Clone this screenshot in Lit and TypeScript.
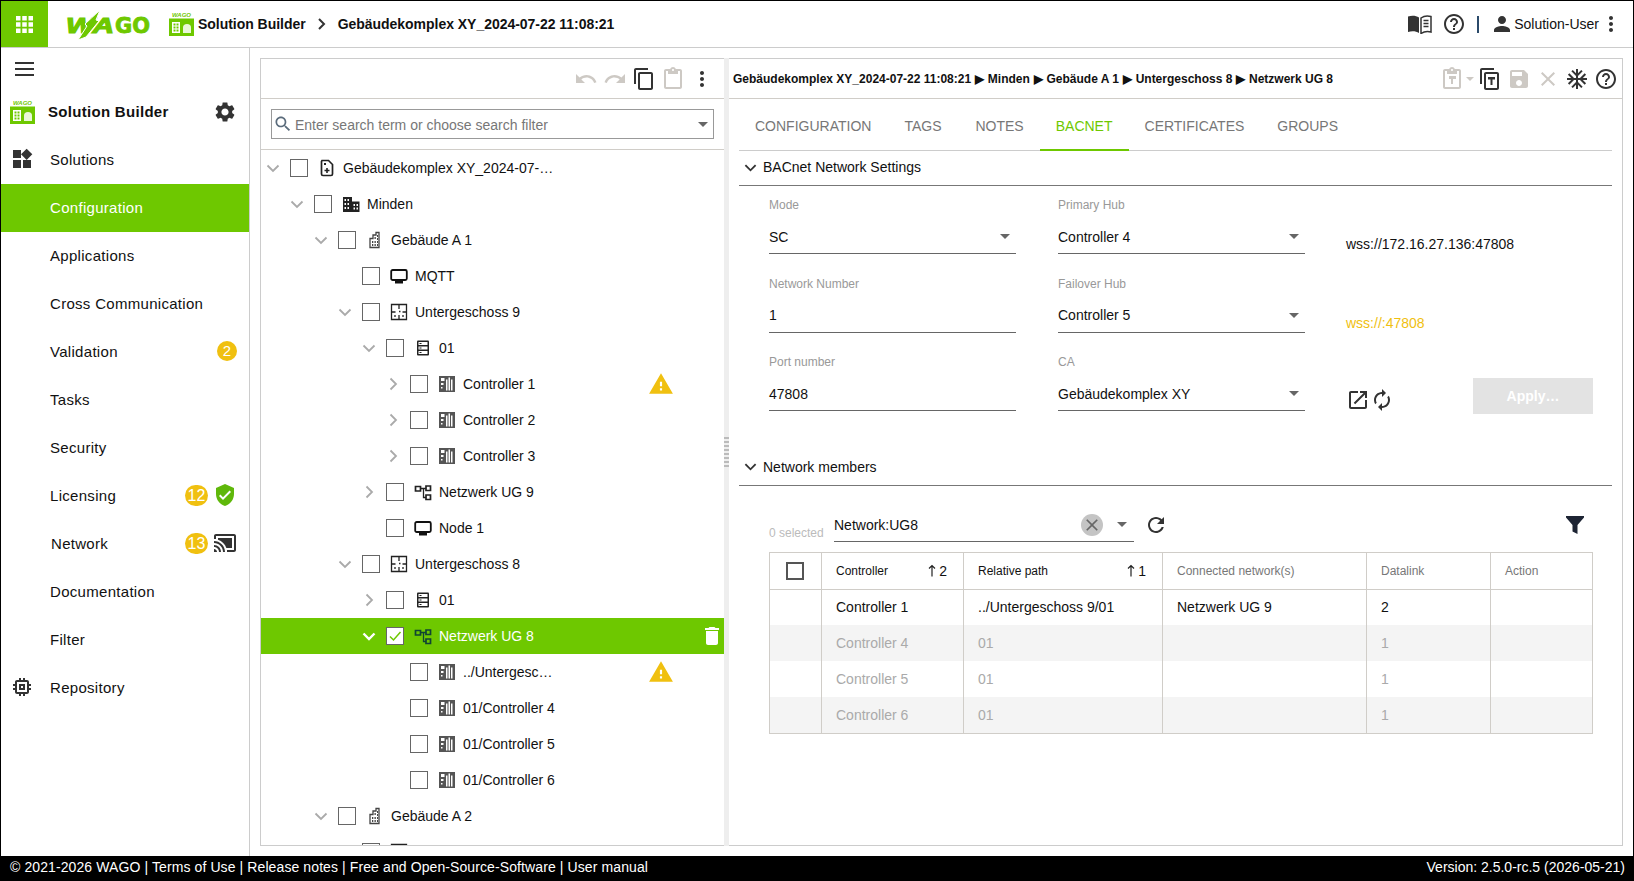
import { LitElement, html, css, nothing } from 'lit';
import { customElement } from 'lit/decorators.js';

const P = {
  gear: 'M19.14 12.94c.04-.3.06-.61.06-.94 0-.32-.02-.64-.07-.94l2.03-1.58c.18-.14.23-.41.12-.61l-1.92-3.32c-.12-.22-.37-.29-.59-.22l-2.39.96c-.5-.38-1.03-.7-1.62-.94l-.36-2.54c-.04-.24-.24-.41-.48-.41h-3.84c-.24 0-.43.17-.47.41l-.36 2.54c-.59.24-1.13.57-1.62.94l-2.39-.96c-.22-.08-.47 0-.59.22L2.74 8.87c-.12.21-.08.47.12.61l2.03 1.58c-.05.3-.09.63-.09.94s.02.64.07.94l-2.03 1.58c-.18.14-.23.41-.12.61l1.92 3.32c.12.22.37.29.59.22l2.39-.96c.5.38 1.03.7 1.62.94l.36 2.54c.05.24.24.41.48.41h3.84c.24 0 .44-.17.47-.41l.36-2.54c.59-.24 1.13-.56 1.62-.94l2.39.96c.22.08.47 0 .59-.22l1.92-3.32c.12-.22.07-.47-.12-.61l-2.01-1.58zM12 15.6c-1.98 0-3.6-1.62-3.6-3.6s1.62-3.6 3.6-3.6 3.6 1.62 3.6 3.6-1.62 3.6-3.6 3.6z',
  widgets: 'M13 13v8h8v-8h-8zM3 21h8v-8H3v8zM3 3v8h8V3H3zm13.66-1.31L11 7.34 16.66 13l5.66-5.66-5.66-5.65z',
  memory: 'M15 9H9v6h6V9zm-2 4h-2v-2h2v2zm8-2V9h-2V7c0-1.1-.9-2-2-2h-2V3h-2v2h-2V3H9v2H7c-1.1 0-2 .9-2 2v2H3v2h2v2H3v2h2v2c0 1.1.9 2 2 2h2v2h2v-2h2v2h2v-2h2c1.1 0 2-.9 2-2v-2h2v-2h-2v-2h2zm-4 6H7V7h10v10z',
  cast: 'M1 18v3h3c0-1.66-1.34-3-3-3zm0-4v2c2.76 0 5 2.24 5 5h2c0-3.87-3.13-7-7-7zm18-7H5v1.63c3.96 1.28 7.09 4.41 8.37 8.37H19V7zM1 10v2c4.97 0 9 4.03 9 9h2c0-6.08-4.93-11-11-11zm20-7H3c-1.1 0-2 .9-2 2v3h2V5h18v14h-7v2h7c1.1 0 2-.9 2-2V5c0-1.1-.9-2-2-2z',
  shield: 'M12 1L3 5v6c0 5.55 3.84 10.74 9 12 5.16-1.26 9-6.45 9-12V5l-9-4zm-2 16l-4-4 1.41-1.41L10 14.17l6.59-6.59L18 9l-8 8z',
  undo: 'M12.5 8c-2.65 0-5.05.99-6.9 2.6L2 7v9h9l-3.62-3.62c1.39-1.16 3.16-1.88 5.12-1.88 3.54 0 6.55 2.31 7.6 5.5l2.37-.78C21.08 11.03 17.15 8 12.5 8z',
  redo: 'M18.4 10.6C16.55 8.99 14.15 8 11.5 8c-4.65 0-8.58 3.03-9.96 7.22L3.9 16c1.05-3.19 4.05-5.5 7.6-5.5 1.95 0 3.73.72 5.12 1.88L13 16h9V7l-3.6 3.6z',
  copy: 'M16 1H4c-1.1 0-2 .9-2 2v14h2V3h12V1zm3 4H8c-1.1 0-2 .9-2 2v14c0 1.1.9 2 2 2h11c1.1 0 2-.9 2-2V7c0-1.1-.9-2-2-2zm0 16H8V7h11v14z',
  clip: 'M19 2h-4.18C14.4.84 13.3 0 12 0c-1.3 0-2.4.84-2.82 2H5c-1.1 0-2 .9-2 2v16c0 1.1.9 2 2 2h14c1.1 0 2-.9 2-2V4c0-1.1-.9-2-2-2zm-7 0c.55 0 1 .45 1 1s-.45 1-1 1-1-.45-1-1 .45-1 1-1zm7 18H5V4h2v3h10V4h2v16z',
  save: 'M17 3H5c-1.11 0-2 .9-2 2v14c0 1.1.89 2 2 2h14c1.1 0 2-.9 2-2V7l-4-4zm-5 16c-1.66 0-3-1.34-3-3s1.34-3 3-3 3 1.34 3 3-1.34 3-3 3zm3-10H5V5h10v4z',
  close: 'M19 6.41L17.59 5 12 10.59 6.41 5 5 6.41 10.59 12 5 17.59 6.41 19 12 13.41 17.59 19 19 17.59 13.41 12z',
  help: 'M11 18h2v-2h-2v2zm1-16C6.48 2 2 6.48 2 12s4.48 10 10 10 10-4.48 10-10S17.52 2 12 2zm0 18c-4.41 0-8-3.59-8-8s3.59-8 8-8 8 3.59 8 8-3.59 8-8 8zm0-14c-2.21 0-4 1.79-4 4h2c0-1.1.9-2 2-2s2 .9 2 2c0 2-3 1.75-3 5h2c0-2.25 3-2.5 3-5 0-2.21-1.79-4-4-4z',
  snow: 'M22 11h-4.17l3.24-3.24-1.41-1.42L15 11h-2V9l4.66-4.66-1.42-1.41L13 6.17V2h-2v4.17L7.76 2.93 6.34 4.34 11 9v2H9L4.34 6.34 2.93 7.76 6.17 11H2v2h4.17l-3.24 3.24 1.41 1.42L9 13h2v2l-4.66 4.66 1.42 1.41L11 17.83V22h2v-4.17l3.24 3.24 1.42-1.41L13 15v-2h2l4.66 4.66 1.41-1.42L17.83 13H22z',
  person: 'M12 12c2.21 0 4-1.79 4-4s-1.79-4-4-4-4 1.79-4 4 1.79 4 4 4zm0 2c-2.67 0-8 1.34-8 4v2h16v-2c0-2.66-5.33-4-8-4z',
  kebab: 'M12 8c1.1 0 2-.9 2-2s-.9-2-2-2-2 .9-2 2 .9 2 2 2zm0 2c-1.1 0-2 .9-2 2s.9 2 2 2 2-.9 2-2-.9-2-2-2zm0 6c-1.1 0-2 .9-2 2s.9 2 2 2 2-.9 2-2-.9-2-2-2z',
  search: 'M15.5 14h-.79l-.28-.27C15.41 12.59 16 11.11 16 9.5 16 5.91 13.09 3 9.5 3S3 5.91 3 9.5 5.91 16 9.5 16c1.61 0 3.09-.59 4.23-1.57l.27.28v.79l5 4.99L20.49 19l-4.99-5zm-6 0C7.01 14 5 11.99 5 9.5S7.01 5 9.5 5 14 7.01 14 9.5 11.99 14 9.5 14z',
  open: 'M19 19H5V5h7V3H5c-1.11 0-2 .9-2 2v14c0 1.1.89 2 2 2h14c1.1 0 2-.9 2-2v-7h-2v7zM14 3v2h3.59l-9.83 9.83 1.41 1.41L19 6.41V10h2V3h-7z',
  renew: 'M12 6v3l4-4-4-4v3c-4.42 0-8 3.58-8 8 0 1.57.46 3.03 1.24 4.26L6.7 14.8c-.45-.83-.7-1.79-.7-2.8 0-3.31 2.69-6 6-6zm6.76 1.74L17.3 9.2c.44.84.7 1.79.7 2.8 0 3.31-2.69 6-6 6v-3l-4 4 4 4v-3c4.42 0 8-3.58 8-8 0-1.57-.46-3.03-1.24-4.26z',
  refresh: 'M17.65 6.35C16.2 4.9 14.21 4 12 4c-4.42 0-7.99 3.58-7.99 8s3.57 8 7.99 8c3.73 0 6.84-2.55 7.73-6h-2.08c-.82 2.33-3.04 4-5.65 4-3.31 0-6-2.69-6-6s2.69-6 6-6c1.66 0 3.14.69 4.22 1.78L13 11h7V4l-2.35 2.35z',
  filter: 'M3 3h18v1.5L14.5 12v9l-5-2.5V12L3 4.5z',
  warn: 'M1 21h22L12 2 1 21zm12-3h-2v-2h2v2zm0-4h-2v-4h2v4z',
  trash: 'M6 19c0 1.1.9 2 2 2h8c1.1 0 2-.9 2-2V7H6v12zM19 4h-3.5l-1-1h-5l-1 1H5v2h14V4z',
  paint: 'M9 9h7v3H13v5h-2v-5H9z',
};

const ic = (d: string, cls = '') => html`<svg class="ic ${cls}" viewBox="0 0 24 24"><path d=${d}></path></svg>`;

const appIcon = (cls: string) => html`<svg class=${cls} viewBox="0 0 25 24">
  <text x="12.5" y="5" text-anchor="middle" font-family="Liberation Sans" font-size="6" font-weight="700" font-style="italic" fill="#6ec800">WAGO</text>
  <rect x="0" y="6.5" width="25" height="17.5" fill="#6ec800"></rect>
  <path d="M3 21V10h8v11zM4.5 11.5v2h2v-2zm3 0v2h2v-2zm-3 3v2h2v-2zm3 0v2h2v-2zm-3 3v2h2v-2zm3 0v2h2v-2z" fill="#fff" fill-rule="evenodd"></path>
  <path d="M14 15.5a4 3.5 0 0 1 8 0V21h-8z" fill="#fff" opacity=".85"></path>
</svg>`;

const chip = html`<svg class="ti" viewBox="0 0 18 18"><rect x="1" y="1" width="16" height="16" fill="#555"></rect><path d="M8 4.500h1.500v11H8zM10.500 2.500H12v13h-1.500zM13 4.500h1.500v11H13zM3 3h3.500v3H3zM3 8h2.500v2H3zM3 12h1.500v1.500H3z" fill="#fff"></path></svg>`;

const treeIcons: Record<string, unknown> = {
  file: html`<svg class="ti" viewBox="0 0 18 18"><path d="M4 1.500h6.500L14.500 5.500V15a1.500 1.500 0 0 1-1.500 1.500H5A1.500 1.500 0 0 1 3.500 15V2.500z" fill="none" stroke="#222" stroke-width="1.700"></path><path d="M8.200 9h1.600v1.700h1.700v1.600H9.800V14H8.200v-1.700H6.500v-1.600h1.700zM6 4h2v2H6z" fill="#222"></path></svg>`,
  complex: html`<svg class="ti" viewBox="0 0 18 18"><path d="M1 2h9v15H1zM10 6.500h7.500V17H10z" fill="#222"></path><path d="M2.500 4h1.500v2H2.500zm3 0H7v2H5.500zm-3 4h1.500v2H2.500zm3 0H7v2H5.500zm-3 4h1.500v2H2.500zm3 0H7v2H5.500zM11.500 9H13v2h-1.500zm3 0H16v2h-1.500zm-3 3.500H13v2h-1.500zm3 0H16v2h-1.500z" fill="#fff"></path></svg>`,
  building: html`<svg class="ti" viewBox="0 0 18 18"><path d="M4 7.500h3V4h3V1.500h3V16.500H4z" fill="none" stroke="#444" stroke-width="1.300"></path><path d="M8.500 6h1.300v2H8.500zm2.500-2h1v2h-1zM6 10h1.300v2H6zm2.500 0h1.300v2H8.500zm2.500 0h1v2h-1zM6 13h1.300v2H6zm2.500 0h1.300v2H8.500zm2.500 0h1v2h-1zM11 7h1v2h-1z" fill="#444"></path></svg>`,
  monitor: html`<svg class="ti" viewBox="0 0 18 18"><rect x="1.200" y="3" width="15.600" height="10" rx="1.500" fill="none" stroke="#111" stroke-width="1.800"></rect><path d="M5 14h8v2.500H5z" fill="#111"></path></svg>`,
  floor: html`<svg class="ti" viewBox="0 0 18 18"><path d="M1.500 1.500h15v15h-15z" fill="none" stroke="#222" stroke-width="1.300"></path><path d="M9 1.500v4.500M1.500 9h4M12.500 9h4M9 8.500h1.500M9 12v4.500M5 12v2M13 12v2" fill="none" stroke="#222" stroke-width="1.300"></path></svg>`,
  rack: html`<svg class="ti" viewBox="0 0 18 18"><rect x="3" y="1.500" width="12" height="15" rx="1" fill="#222"></rect><path d="M4.500 3H13.500V6H4.500zM4.500 7.500H13.500V10.500H4.500zM4.500 12H13.500V15H4.500z" fill="#fff"></path><path d="M5.500 4h2v1h-2zM5.500 8.500h2v1h-2zM5.500 13h2v1h-2z" fill="#222"></path></svg>`,
  chip,
  network: html`<svg class="ti" viewBox="0 0 18 18"><path d="M6.500 5.500h5.500M9.500 5.500v9H12" fill="none" stroke="var(--net,#222)" stroke-width="1.300"></path><path d="M1.500 3.500h5v4.500h-5zM12 3h4.500v4.500H12zM12 12h4.500v4.500H12z" fill="none" stroke="var(--net,#222)" stroke-width="1.700"></path></svg>`,
};

interface TreeRow { level: number; chev?: 'down' | 'right'; icon: string; label: string; warn?: boolean; selected?: boolean }

const TREE: TreeRow[] = [
  { level: 0, chev: 'down', icon: 'file', label: 'Gebäudekomplex XY_2024-07-22 11:08:21' },
  { level: 1, chev: 'down', icon: 'complex', label: 'Minden' },
  { level: 2, chev: 'down', icon: 'building', label: 'Gebäude A 1' },
  { level: 3, icon: 'monitor', label: 'MQTT' },
  { level: 3, chev: 'down', icon: 'floor', label: 'Untergeschoss 9' },
  { level: 4, chev: 'down', icon: 'rack', label: '01' },
  { level: 5, chev: 'right', icon: 'chip', label: 'Controller 1', warn: true },
  { level: 5, chev: 'right', icon: 'chip', label: 'Controller 2' },
  { level: 5, chev: 'right', icon: 'chip', label: 'Controller 3' },
  { level: 4, chev: 'right', icon: 'network', label: 'Netzwerk UG 9' },
  { level: 4, icon: 'monitor', label: 'Node 1' },
  { level: 3, chev: 'down', icon: 'floor', label: 'Untergeschoss 8' },
  { level: 4, chev: 'right', icon: 'rack', label: '01' },
  { level: 4, chev: 'down', icon: 'network', label: 'Netzwerk UG 8', selected: true },
  { level: 5, icon: 'chip', label: '../Untergeschoss 9/01/Controller 1', warn: true },
  { level: 5, icon: 'chip', label: '01/Controller 4' },
  { level: 5, icon: 'chip', label: '01/Controller 5' },
  { level: 5, icon: 'chip', label: '01/Controller 6' },
  { level: 2, chev: 'down', icon: 'building', label: 'Gebäude A 2' },
  // scrolled off below the panel edge, only the top of the row shows
  { level: 3, icon: 'floor', label: '' },
];

const NAV = [
  { label: 'Solutions', icon: P.widgets },
  { label: 'Configuration', active: true },
  { label: 'Applications' },
  { label: 'Cross Communication' },
  { label: 'Validation', badge: '2' },
  { label: 'Tasks' },
  { label: 'Security' },
  { label: 'Licensing', badge: '12', wide: true, after: 'shield' },
  { label: 'Network', badge: '13', wide: true, after: 'cast', shift: true },
  { label: 'Documentation' },
  { label: 'Filter' },
  { label: 'Repository', icon: P.memory },
];

const MEMBERS = [
  { name: 'Controller 1', path: '../Untergeschoss 9/01', net: 'Netzwerk UG 9', link: '2' },
  { name: 'Controller 4', path: '01', net: '', link: '1', off: true },
  { name: 'Controller 5', path: '01', net: '', link: '1', off: true },
  { name: 'Controller 6', path: '01', net: '', link: '1', off: true },
];

const chevron = (dir: 'down' | 'right') =>
  html`<svg class="chev" viewBox="0 0 14 14"><path d=${dir === 'down' ? 'M1.500 4.500L7 10l5.500-5.500' : 'M4.500 1.500L10 7l-5.500 5.500'}></path></svg>`;

const sortMark = (n: string) => html`<span class="sort"><svg viewBox="0 0 8 13"><path d="M4 12.500V1.500M1 4.500L4 1.500l3 3"></path></svg>${n}</span>`;

@customElement('app-root')
export class AppRoot extends LitElement {
  static styles = css`
    :host {
      display: flex;
      flex-direction: column;
      box-sizing: border-box;
      height: 881px;
      border: 1px solid #000;
      font: 14px 'Liberation Sans', Arial, sans-serif;
      color: #111;
      background: #fff;
      overflow: hidden;
    }
    * { box-sizing: border-box; }
    .ic { width: 24px; height: 24px; flex: none; fill: #333; display: block; }
    .off { fill: #cdc9c4; }
    .ti { width: 18px; height: 18px; flex: none; display: block; }

    /* top bar */
    .top { height: 47px; flex: none; display: flex; align-items: center; border-bottom: 1px solid #ccc; }
    .apps { width: 47px; height: 46px; background: #6ec800; display: grid; place-items: center; }
    .apps svg { width: 17px; height: 17px; fill: #fff; display: block; }
    .logo { width: 86px; height: 32px; margin-left: 18px; display: block; overflow: visible; }
    .appicon { width: 25px; height: 24px; display: block; flex: none; }
    .top .appicon { margin-left: 17px; }
    .crumb { font-weight: 700; white-space: nowrap; letter-spacing: -0.03px; }
    .crumb.first { margin-left: 4px; }
    .sep-chev { width: 12px; height: 12px; margin: 0 10px; fill: none; stroke: #333; stroke-width: 2; flex: none; }
    .top-right { margin-left: auto; display: flex; align-items: center; padding-right: 10px; }
    .book { width: 24px; height: 20px; display: block; }
    .top-right .help { margin-left: 10px; }
    .vsep { width: 2px; height: 17px; background: #2b4a6a; margin: 0 11px; }

    /* layout */
    .main { flex: 1; min-height: 0; display: flex; }
    .side { width: 249px; flex: none; border-right: 1px solid #ccc; }
    .burger { height: 42px; display: flex; align-items: center; padding-left: 14px; }
    .burger span { display: block; width: 19px; height: 14px; border-top: 2px solid #333; border-bottom: 2px solid #333; position: relative; }
    .burger span::after { content: ''; position: absolute; left: 0; right: 0; top: 4px; height: 2px; background: #333; }
    .sb { height: 46px; display: flex; align-items: center; padding: 0 0 3px 9px; }
    .sb b { margin-left: 13px; font-size: 15px; letter-spacing: 0.3px; }
    .sb .ic { margin-left: auto; margin-right: 12px; }
    .nav { height: 48px; display: flex; align-items: center; position: relative; padding: 0 12px 2px 49px; font-size: 15px; letter-spacing: 0.3px; }
    .nav.active { background: #6ec800; color: #fff; }
    .nav .ic { position: absolute; left: 9px; top: 11px; }
    .nav .shifted { margin-left: 1px; }
    .nav-end { margin-left: auto; display: flex; align-items: center; gap: 5px; letter-spacing: 0; }
    .badge { width: 20px; height: 20px; border-radius: 50%; background: #f0c010; color: #fff; font-size: 15px; line-height: 20px; text-align: center; }
    .badge.wide { width: 23px; height: 21px; border-radius: 11px; line-height: 21px; font-size: 16px; }
    .nav-end .ic { position: static; }
    .nav-end .green { fill: #5fb80a; }
    .content { flex: 1; min-width: 0; display: flex; padding: 10px; }

    /* tree panel */
    .tree-panel { width: 464px; flex: none; display: flex; flex-direction: column; border: 1px solid #ccc; border-right: 0; min-height: 0; }
    .bar { height: 40px; flex: none; display: flex; align-items: center; justify-content: flex-end; border-bottom: 1px solid #d0cdc8; }
    .tree-panel .bar { padding-right: 10px; gap: 5px; }
    .search-wrap { height: 51px; flex: none; padding: 10px 10px 0; border-bottom: 1px solid #d0cdc8; }
    .search { height: 30px; border: 1px solid #999; display: flex; align-items: center; color: #777; padding-left: 1px; padding-right: 5px; }
    .search .ic { width: 20px; height: 20px; fill: #5a6b7b; }
    .search span { margin-left: 2px; flex: 1; padding-top: 2px; }
    .caret { width: 0; height: 0; border: 5.500px solid transparent; border-top-color: #666; border-bottom: 0; flex: none; }
    .tree { flex: 1; min-height: 0; overflow: hidden; }
    .row { height: 36px; display: flex; align-items: center; }
    .row.sel { background: #6ec800; color: #fff; --net: #143; }
    .chev-slot { width: 24px; flex: none; display: grid; place-items: center; }
    .chev { width: 14px; height: 14px; fill: none; stroke: #aaa; stroke-width: 1.8; display: block; }
    .row.sel .chev { stroke: #fff; stroke-width: 2.4; }
    .cb { width: 18px; height: 18px; border: 1px solid #666; background: #fff; margin-left: 5px; flex: none; display: grid; place-items: center; }
    .cb svg { width: 14px; height: 14px; fill: none; stroke: #6ec800; stroke-width: 1.500; }
    .row .ti { margin-left: 10px; }
    .label { margin-left: 7px; flex: 1; min-width: 0; white-space: nowrap; overflow: hidden; text-overflow: ellipsis; }
    .slot { width: 168px; flex: none; display: flex; align-items: center; }
    .warn { width: 26px; height: 26px; fill: #f0c010; margin-left: 92px; }
    .trash { fill: #fff; margin-left: auto; }

    .gutter { width: 5px; flex: none; background: #eee; display: flex; align-items: center; justify-content: center; }
    .gutter i { display: block; width: 5px; height: 32px; background: radial-gradient(circle at center, #bbb 0 1px, transparent 1.4px) 0 0 / 2.500px 4px; }

    /* detail panel */
    .detail { flex: 1; min-width: 0; display: flex; flex-direction: column; border: 1px solid #ccc; border-left: 0; }
    .detail .bar { padding-left: 4px; padding-right: 4px; gap: 5px; }
    .path { margin-right: auto; font-size: 12px; font-weight: 700; white-space: nowrap; }
    .path i { font-style: normal; font-size: 12px; margin: 0 0.5px; }
    .mini-caret { width: 0; height: 0; border: 4px solid transparent; border-top-color: #cdc9c4; border-bottom: 0; margin-left: -3px; margin-right: -1px; }
    .body { flex: 1; padding: 0 10px; min-height: 0; }
    .tabs { height: 52px; display: flex; border-bottom: 1px solid #ccc; color: #777; }
    .tab { padding: 19px 16px 0; height: 52px; white-space: nowrap; }
    .tab:nth-child(2) { padding-left: 17px; padding-right: 18px; }
    .tab:last-child { padding-left: 17px; }
    .tab.active { color: #6ec800; border-bottom: 2px solid #6ec800; }
    .section { height: 35px; display: flex; align-items: center; gap: 6px; border-bottom: 1px solid #777; padding: 0 0 2px 5px; }
    .section svg { width: 13px; height: 13px; fill: none; stroke: #333; stroke-width: 2; }
    .form { display: grid; grid-template-columns: 247px 247px 1fr; column-gap: 42px; grid-auto-rows: 78.5px; padding: 10px 19px 0 30px; margin-bottom: 19px; }
    .form .info { padding-top: 40px; margin-left: -1px; }
    .warn-text { color: #f0c010; }
    .field-label { height: 18px; line-height: 18px; font-size: 12px; color: #999; }
    .select { height: 40px; border-bottom: 1px solid #666; display: flex; align-items: center; justify-content: space-between; padding: 6px 6px 0 0; }
    .actions { display: flex; align-items: flex-start; padding-top: 25px; margin-left: -1px; }
    .actions .ic { margin-top: 10px; }
    .apply { width: 120px; height: 36px; margin-left: auto; background: #e3e3e3; color: #fff; display: grid; place-items: center; font-weight: 700; }
    .filters { height: 66px; display: flex; align-items: flex-end; padding: 0 25px 10px 30px; }
    .count { width: 65px; font-size: 12px; color: #bbb; line-height: 14px; padding-bottom: 2px; white-space: nowrap; }
    .combo { width: 300px; height: 33px; border-bottom: 1px solid #666; display: flex; align-items: center; padding-right: 7px; }
    .combo span { flex: 1; }
    .clear { width: 22px; height: 22px; border-radius: 50%; background: #c4c4c4; display: grid; place-items: center; margin-right: 14px; }
    .clear .ic { width: 20px; height: 20px; fill: #666; }
    .reload { margin-left: 10px; margin-bottom: 5px; }
    .funnel { margin-left: auto; margin-bottom: 5px; fill: #1d2433; }

    table { border-collapse: collapse; table-layout: fixed; width: 823px; margin-left: 30px; }
    th, td { border-left: 1px solid #d0cdc8; border-right: 1px solid #d0cdc8; padding: 0 14px; height: 36px; text-align: left; font-weight: 400; white-space: nowrap; }
    th { border-top: 1px solid #d0cdc8; border-bottom: 1px solid #d0cdc8; font-size: 12px; color: #777; height: 37px; }
    th.sorted { color: #111; }
    tr:last-child td { border-bottom: 1px solid #d0cdc8; }
    tr.odd td { background: #f4f4f4; }
    td.off { color: #aaa; }
    .head-in { display: flex; align-items: center; justify-content: space-between; padding-right: 2px; }
    .sort { font-size: 14px; display: flex; align-items: center; gap: 3px; }
    .sort svg { width: 8px; height: 13px; fill: none; stroke: #222; stroke-width: 1.2; display: block; }
    .all { width: 18px; height: 18px; border: 2px solid #555; margin-left: 2px; }

    .foot { height: 24px; flex: none; background: #000; color: #fff; display: flex; align-items: center; justify-content: space-between; padding: 0 8px 2px 9px; white-space: nowrap; }
    .foot .links { letter-spacing: 0.1px; }
  `;

  private renderNav() {
    return NAV.map((n) => html`
      <div class="nav ${n.active ? 'active' : ''}">
        ${n.icon ? ic(n.icon) : nothing}
        <span class=${n.shift ? 'shifted' : ''}>${n.label}</span>
        ${n.badge ? html`<div class="nav-end">
          <div class="badge ${n.wide ? 'wide' : ''}">${n.badge}</div>
          ${n.after === 'shield' ? ic(P.shield, 'green') : nothing}
          ${n.after === 'cast' ? ic(P.cast) : nothing}
        </div>` : nothing}
      </div>`);
  }

  private renderTree() {
    return TREE.map((r) => html`
      <div class="row ${r.selected ? 'sel' : ''}" style="padding-left:${r.level * 24}px">
        <div class="chev-slot">${r.chev ? chevron(r.chev) : nothing}</div>
        <div class="cb">${r.selected ? html`<svg viewBox="0 0 14 14"><path d="M2 7.500l3.500 3.500L12.500 3"></path></svg>` : nothing}</div>
        ${treeIcons[r.icon]}
        <span class="label">${r.label}</span>
        <div class="slot">
          ${r.warn ? ic(P.warn, 'warn') : nothing}
          ${r.selected ? ic(P.trash, 'trash') : nothing}
        </div>
      </div>`);
  }

  private field(label: string, value: string) {
    return html`<div>
      <div class="field-label">${label}</div>
      <div class="select"><span>${value}</span><div class="caret"></div></div>
    </div>`;
  }

  render() {
    return html`
      <header class="top">
        <div class="apps">
          <svg viewBox="0 0 17 17"><path d="M0 0h4.500v4.500H0zM6.250 0h4.500v4.500h-4.500zM12.500 0H17v4.500h-4.500zM0 6.250h4.500v4.500H0zM6.250 6.250h4.500v4.500h-4.500zM12.500 6.250H17v4.500h-4.500zM0 12.500h4.500V17H0zM6.250 12.500h4.500V17h-4.500zM12.500 12.500H17V17h-4.500z"></path></svg>
        </div>
        <svg class="logo" viewBox="0 0 86 32">
          <text x="0" y="25" font-family="Liberation Sans" font-size="22" font-weight="700" font-style="italic" fill="#6ec800" stroke="#6ec800" stroke-width="1.200" textLength="48" lengthAdjust="spacingAndGlyphs">WA</text>
          <text x="49" y="25" font-family="DejaVu Sans" font-size="22" font-weight="700" fill="#6ec800" stroke="#6ec800" stroke-width="0.800" textLength="35" lengthAdjust="spacingAndGlyphs">GO</text>
          <path d="M12 32L21 18 19 16 34 2 30 12 33 13 20 29z" fill="#6ec800" stroke="#fff" stroke-width="1"></path>
        </svg>
        ${appIcon('appicon')}
        <span class="crumb first">Solution Builder</span>
        <svg class="sep-chev" viewBox="0 0 12 12"><path d="M3 1l5 5-5 5"></path></svg>
        <span class="crumb">Gebäudekomplex XY_2024-07-22 11:08:21</span>
        <div class="top-right">
          <svg class="book" viewBox="0 0 24 20"><path d="M0 2.500C4 1 8 1.500 11 3.500V19C8 17 4 16.500 0 18z" fill="#333"></path><path d="M13 4c3-2.200 6-2.600 10-1.500V18c-4-1-7-.5-10 1.500z" fill="none" stroke="#333" stroke-width="1.500"></path><path d="M15.500 6.500h5M15.500 9.500h5M15.500 12.500h5" stroke="#333" stroke-width="1.300"></path></svg>
          ${ic(P.help, 'help')}
          <div class="vsep"></div>
          ${ic(P.person)}
          <span>Solution-User</span>
          ${ic(P.kebab)}
        </div>
      </header>
      <div class="main">
        <nav class="side">
          <div class="burger"><span></span></div>
          <div class="sb">${appIcon('appicon')}<b>Solution Builder</b>${ic(P.gear)}</div>
          ${this.renderNav()}
        </nav>
        <div class="content">
          <section class="tree-panel">
            <div class="bar">
              ${ic(P.undo, 'off')}${ic(P.redo, 'off')}${ic(P.copy)}${ic(P.clip, 'off')}${ic(P.kebab)}
            </div>
            <div class="search-wrap">
              <div class="search">${ic(P.search)}<span>Enter search term or choose search filter</span><div class="caret"></div></div>
            </div>
            <div class="tree">${this.renderTree()}</div>
          </section>
          <div class="gutter"><i></i></div>
          <section class="detail">
            <div class="bar">
              <div class="path">Gebäudekomplex XY_2024-07-22 11:08:21 <i>▶</i> Minden <i>▶</i> Gebäude A 1 <i>▶</i> Untergeschoss 8 <i>▶</i> Netzwerk UG 8</div>
              <svg class="ic off" viewBox="0 0 24 24"><path d=${P.clip}></path><path d=${P.paint}></path></svg>
              <div class="mini-caret"></div>
              <svg class="ic" viewBox="0 0 24 24"><path d=${P.copy}></path><path d="M10 10h7v2.500h-2.500V18h-2v-5.500H10z"></path></svg>
              ${ic(P.save, 'off')}${ic(P.close, 'off')}${ic(P.snow)}${ic(P.help)}
            </div>
            <div class="body">
              <div class="tabs">
                <div class="tab">CONFIGURATION</div>
                <div class="tab">TAGS</div>
                <div class="tab">NOTES</div>
                <div class="tab active">BACNET</div>
                <div class="tab">CERTIFICATES</div>
                <div class="tab">GROUPS</div>
              </div>
              <div class="section">${chevron('down')}<span>BACnet Network Settings</span></div>
              <div class="form">
                ${this.field('Mode', 'SC')}
                ${this.field('Primary Hub', 'Controller 4')}
                <div class="info">wss://172.16.27.136:47808</div>
                <div>
                  <div class="field-label">Network Number</div>
                  <div class="select"><span>1</span></div>
                </div>
                ${this.field('Failover Hub', 'Controller 5')}
                <div class="info warn-text">wss://:47808</div>
                <div>
                  <div class="field-label">Port number</div>
                  <div class="select"><span>47808</span></div>
                </div>
                ${this.field('CA', 'Gebäudekomplex XY')}
                <div class="actions">${ic(P.open)}${ic(P.renew)}<div class="apply">Apply…</div></div>
              </div>
              <div class="section">${chevron('down')}<span>Network members</span></div>
              <div class="filters">
                <div class="count">0 selected</div>
                <div class="combo">
                  <span>Network:UG8</span>
                  <div class="clear">${ic(P.close)}</div>
                  <div class="caret"></div>
                </div>
                ${ic(P.refresh, 'reload')}
                ${ic(P.filter, 'funnel')}
              </div>
              <table>
                <colgroup>
                  <col style="width:52px" /><col style="width:142px" /><col style="width:199px" />
                  <col style="width:204px" /><col style="width:124px" /><col style="width:102px" />
                </colgroup>
                <tr>
                  <th><div class="all"></div></th>
                  <th class="sorted"><div class="head-in"><span>Controller</span>${sortMark('2')}</div></th>
                  <th class="sorted"><div class="head-in"><span>Relative path</span>${sortMark('1')}</div></th>
                  <th>Connected network(s)</th>
                  <th>Datalink</th>
                  <th>Action</th>
                </tr>
                ${MEMBERS.map((m, i) => html`
                  <tr class=${i % 2 ? 'odd' : ''}>
                    <td></td>
                    <td class=${m.off ? 'off' : ''}>${m.name}</td>
                    <td class=${m.off ? 'off' : ''}>${m.path}</td>
                    <td>${m.net}</td>
                    <td class=${m.off ? 'off' : ''}>${m.link}</td>
                    <td></td>
                  </tr>`)}
              </table>
            </div>
          </section>
        </div>
      </div>
      <footer class="foot">
        <span class="links">© 2021-2026 WAGO | Terms of Use | Release notes | Free and Open-Source-Software | User manual</span>
        <span>Version: 2.5.0-rc.5 (2026-05-21)</span>
      </footer>
    `;
  }
}
